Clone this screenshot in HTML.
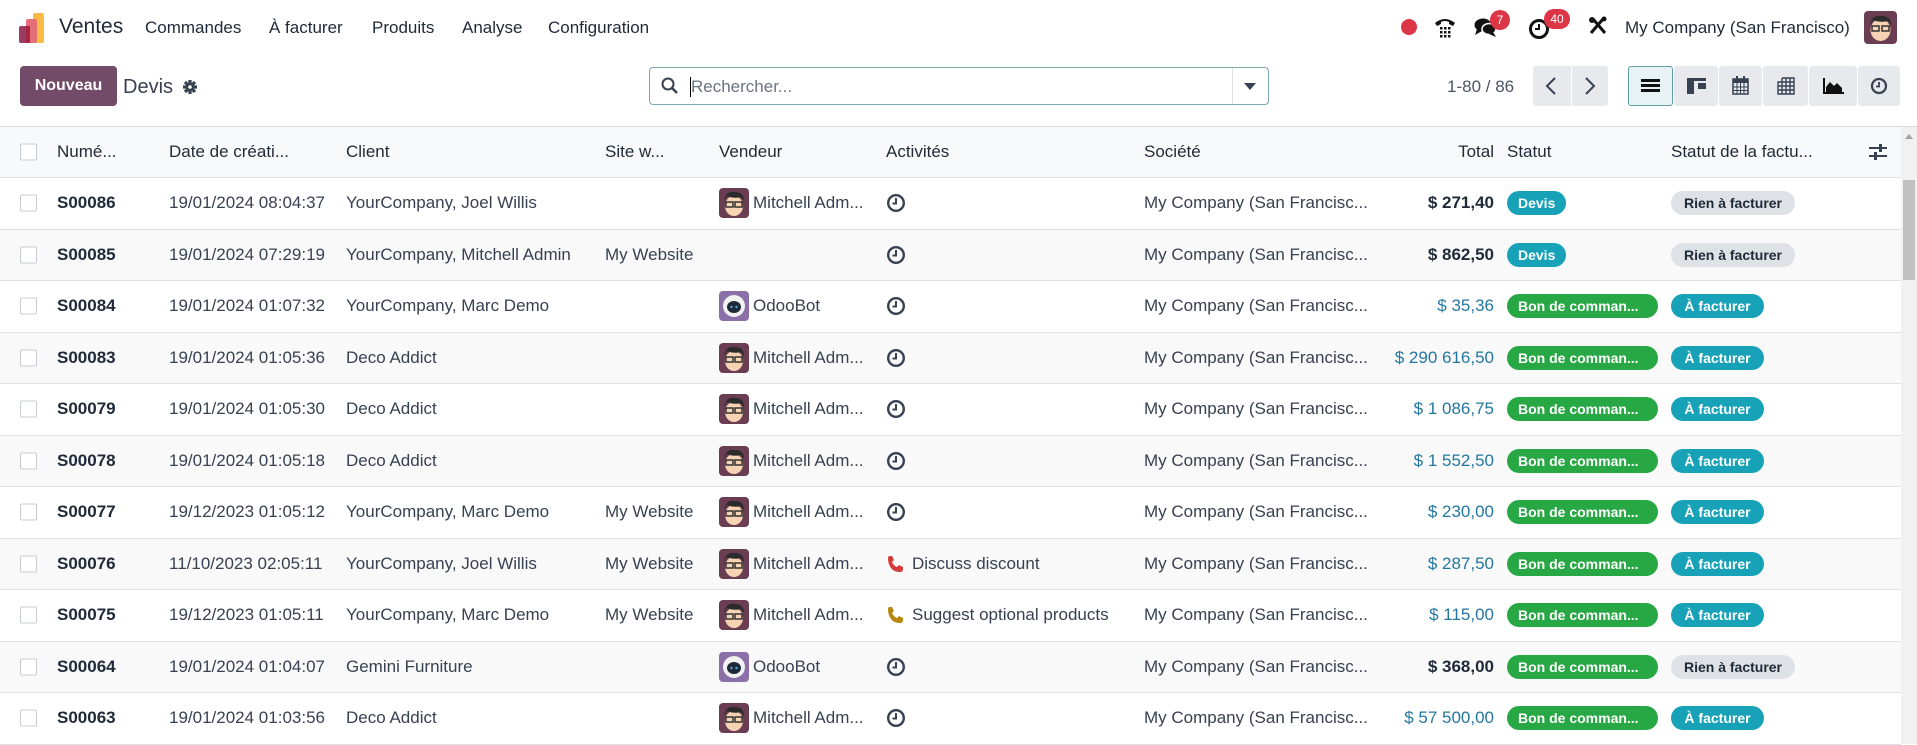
<!DOCTYPE html>
<html><head><meta charset="utf-8"><style>
*{box-sizing:border-box;margin:0;padding:0}
body{width:1917px;height:744px;overflow:hidden;background:#fff;font-family:"Liberation Sans",sans-serif;color:#374151;position:relative}
.a{position:absolute;white-space:nowrap}
.nav{font-size:17px;color:#1f2937;top:18px}
.row{position:absolute;left:0;width:1901px;height:51.5px;border-bottom:1px solid #dee2e6;font-size:17px}
.row .a{top:50%;transform:translateY(-50%)}
.g{background:#f9f9fa}
.cb{left:20px;width:17px;height:17px;border:1px solid #c7cbd1;background:#fff;border-radius:2px}
.num{left:57px;font-weight:bold;color:#1f2937}
.date{left:169px}.cli{left:346px}.site{left:605px}
.av{left:719px;width:30px;height:30px;border-radius:4px;overflow:hidden}
.vend{left:753px}
.act{left:886px}
.soc{left:1144px}
.tot{right:407px}
.b{font-weight:bold;color:#1f2937}
.bl{color:#23779f}
.st{left:1507px}.sf{left:1671px}
.badge{font-size:14px;font-weight:bold;height:24px;line-height:24px;padding:0 11px;border-radius:12px;color:#fff}
.dv{background:#17a2b8}.bo{background:#28a745;width:151px}.af{background:#17a2b8;width:93px;text-align:center}.ri{background:#dee2e6;color:#1f2937;width:124px;text-align:center;font-weight:bold}
.vb{position:absolute;top:66px;height:40px;background:#e7e9ed;border-radius:3px}
</style></head><body>
<svg class="a" style="left:19px;top:13px" width="28" height="30" viewBox="0 0 28 30"><rect x="14" y="0" width="11" height="30" rx="2" fill="#fbb945"/><rect x="7" y="6" width="11" height="24" rx="2" fill="#e46f78"/><rect x="0" y="13" width="11" height="17" rx="2" fill="#9c3b63"/><rect x="7" y="13" width="4" height="17" fill="#a5283f"/></svg>
<div class="a nav" style="left:59px;top:15px;font-size:21px">Ventes</div>
<div class="a nav" style="left:145px">Commandes</div>
<div class="a nav" style="left:269px">À facturer</div>
<div class="a nav" style="left:372px">Produits</div>
<div class="a nav" style="left:462px">Analyse</div>
<div class="a nav" style="left:548px">Configuration</div>
<div class="a" style="left:1401px;top:19px;width:16px;height:16px;border-radius:50%;background:#dc3545"></div>
<svg class="a" style="left:1434px;top:16px" width="22" height="22" viewBox="0 0 22 22"><path d="M1 7 Q11 -1 21 7 L19 10 L15 8 L15 6 Q11 4 7 6 L7 8 L3 10Z" fill="#111"/><g fill="#111"><rect x="6" y="11" width="2.5" height="2.5"/><rect x="10" y="11" width="2.5" height="2.5"/><rect x="14" y="11" width="2.5" height="2.5"/><rect x="6" y="15" width="2.5" height="2.5"/><rect x="10" y="15" width="2.5" height="2.5"/><rect x="14" y="15" width="2.5" height="2.5"/><rect x="6" y="19" width="2.5" height="2.5"/><rect x="10" y="19" width="2.5" height="2.5"/><rect x="14" y="19" width="2.5" height="2.5"/></g></svg>
<svg class="a" style="left:1474px;top:16px" width="24" height="22" viewBox="0 0 24 22"><ellipse cx="9" cy="9" rx="8.5" ry="6.5" fill="#111"/><path d="M3 13 L1 19 L8 15Z" fill="#111"/><ellipse cx="15" cy="13" rx="7" ry="5.5" fill="#111" stroke="#fff" stroke-width="1.5"/><path d="M19 16 L22 21 L15 18Z" fill="#111"/></svg>
<div class="a" style="left:1490px;top:10px;width:20px;height:20px;border-radius:10px;background:#dc3545;color:#fff;font-size:12px;line-height:20px;text-align:center">7</div>
<svg class="a" style="left:1528px;top:18px" width="22" height="22" viewBox="0 0 22 22"><circle cx="11" cy="11" r="8.5" fill="none" stroke="#111" stroke-width="3"/><path d="M11 6 V11 H7" fill="none" stroke="#111" stroke-width="2"/></svg>
<div class="a" style="left:1544px;top:9px;width:26px;height:20px;border-radius:10px;background:#dc3545;color:#fff;font-size:12px;line-height:20px;text-align:center">40</div>
<svg class="a" style="left:1588px;top:16px" width="20" height="20" viewBox="0 0 20 20"><path d="M3 17 L15 3 M5 3 L17 17" stroke="#111" stroke-width="3"/><circle cx="4" cy="4" r="3" fill="#111"/><circle cx="16" cy="3" r="2.5" fill="#111"/></svg>
<div class="a nav" style="left:1625px;font-size:17px">My Company (San Francisco)</div>
<svg class="a" style="left:1864px;top:11px" width="33" height="33" viewBox="0 0 33 33"><rect width="33" height="33" rx="4" fill="#6a3d52"/><ellipse cx="16.5" cy="19" rx="10" ry="11" fill="#f5d3b3"/><path d="M6 14 Q8 3 18 5 Q27 5 27 14 L24 10 Q16 12 9 9Z" fill="#2b2b2b"/><rect x="8" y="15" width="7" height="5" fill="none" stroke="#333" stroke-width="1.5"/><rect x="18" y="15" width="7" height="5" fill="none" stroke="#333" stroke-width="1.5"/></svg>
<div class="a" style="left:20px;top:66px;width:97px;height:40px;background:#714b67;border-radius:4px;color:#fff;font-weight:bold;font-size:16px;line-height:40px;text-align:center">Nouveau</div>
<div class="a" style="left:123px;top:76px;font-size:20px;color:#374151">Devis</div>
<svg class="a" style="left:182px;top:79px" width="16" height="16" viewBox="0 0 16 16"><g stroke="#374151" stroke-width="3.2"><path d="M8 1 V15 M1 8 H15 M3 3 L13 13 M13 3 L3 13"/></g><circle cx="8" cy="8" r="4.5" fill="#374151"/><circle cx="8" cy="8" r="1.8" fill="#fff"/></svg>
<div class="a" style="left:649px;top:67px;width:620px;height:38px;border:1px solid #7fa8b0;border-radius:4px"></div>
<div class="a" style="left:1232px;top:68px;width:1px;height:36px;background:#dee2e6"></div>
<svg class="a" style="left:661px;top:77px" width="18" height="18" viewBox="0 0 18 18"><circle cx="7" cy="7" r="5.5" fill="none" stroke="#374151" stroke-width="2"/><path d="M11 11 L16 16" stroke="#374151" stroke-width="2.5"/></svg>
<div class="a" style="left:690px;top:77px;width:1px;height:20px;background:#000"></div>
<div class="a" style="left:691px;top:77px;font-size:17px;color:#6b7280">Rechercher...</div>
<svg class="a" style="left:1244px;top:83px" width="12" height="8" viewBox="0 0 12 8"><path d="M0 0 H12 L6 7Z" fill="#374151"/></svg>
<div class="a" style="left:1447px;top:77px;font-size:17px;color:#4b5563">1-80 / 86</div>
<div class="vb" style="left:1533px;width:38px;border-radius:3px 0 0 3px"></div>
<div class="vb" style="left:1572px;width:36px;border-radius:0 3px 3px 0"></div>
<svg class="a" style="left:1545px;top:77px" width="12" height="18" viewBox="0 0 12 18"><path d="M10 1 L2 9 L10 17" fill="none" stroke="#374151" stroke-width="2"/></svg>
<svg class="a" style="left:1584px;top:77px" width="12" height="18" viewBox="0 0 12 18"><path d="M2 1 L10 9 L2 17" fill="none" stroke="#374151" stroke-width="2"/></svg>
<div class="vb" style="left:1628px;width:45px;background:#e6f2f3;border:1px solid #5f9ea6"></div>
<div class="vb" style="left:1674px;width:44px"></div>
<div class="vb" style="left:1719px;width:43px"></div>
<div class="vb" style="left:1763px;width:45px"></div>
<div class="vb" style="left:1809px;width:48px"></div>
<div class="vb" style="left:1858px;width:42px"></div>
<svg class="a" style="left:1641px;top:78px" width="19" height="16" viewBox="0 0 19 16"><rect y="1" width="19" height="3" fill="#111"/><rect y="6" width="19" height="3" fill="#111"/><rect y="11" width="19" height="3" fill="#111"/></svg>
<svg class="a" style="left:1687px;top:78px" width="19" height="16" viewBox="0 0 19 16"><rect x="0" y="0" width="19" height="3" fill="#374151"/><rect x="0" y="0" width="7" height="16" fill="#374151"/><rect x="11" y="5" width="8" height="6" fill="#374151"/></svg>
<svg class="a" style="left:1732px;top:76px" width="17" height="19" viewBox="0 0 17 19"><rect x="1" y="3" width="15" height="15" fill="none" stroke="#374151" stroke-width="1.5"/><rect x="1" y="3" width="15" height="4" fill="#374151"/><path d="M1 11 H16 M1 14.5 H16 M5 7 V18 M8.5 7 V18 M12 7 V18" stroke="#374151" stroke-width="1"/><rect x="4" y="0" width="2" height="4" fill="#374151"/><rect x="11" y="0" width="2" height="4" fill="#374151"/></svg>
<svg class="a" style="left:1777px;top:77px" width="18" height="18" viewBox="0 0 18 18"><path d="M5 1 H17 V17 H1 V5 H17 M1 9 H17 M1 13 H17 M5 1 V17 M9 1 V17 M13 1 V17" fill="none" stroke="#374151" stroke-width="1.4"/></svg>
<svg class="a" style="left:1823px;top:78px" width="21" height="16" viewBox="0 0 21 16"><path d="M1 0 V15 H21" fill="none" stroke="#111" stroke-width="2"/><path d="M3 14 L3 9 L7 4 L11 8 L14 5 L19 10 L19 14Z" fill="#111"/></svg>
<svg class="a" style="left:1870px;top:77px" width="18" height="18" viewBox="0 0 18 18"><circle cx="9" cy="9" r="7" fill="none" stroke="#374151" stroke-width="2.2"/><path d="M9 5 V9.5 H6" fill="none" stroke="#374151" stroke-width="1.8"/></svg>
<div class="a" style="left:0;top:126px;width:1917px;height:1px;background:#d8dadd"></div>
<div class="row" style="top:127px;background:#f8f9fa;font-size:17px;color:#1f2937;height:51px">
<div class="a cb"></div><div class="a" style="left:57px">Numé...</div><div class="a date">Date de créati...</div><div class="a cli">Client</div><div class="a site">Site w...</div><div class="a" style="left:719px">Vendeur</div><div class="a act">Activités</div><div class="a soc">Société</div><div class="a tot">Total</div><div class="a st">Statut</div><div class="a sf">Statut de la factu...</div>
<svg class="a" style="left:1869px" width="18" height="18" viewBox="0 0 18 18"><path d="M0 5 H18 M0 13 H18" stroke="#374151" stroke-width="2"/><rect x="10" y="1" width="3" height="8" fill="#374151"/><rect x="5" y="9" width="3" height="8" fill="#374151"/></svg>
</div>
<div class="a" style="left:1901px;top:127px;width:16px;height:617px;background:#f1f1f1"></div>
<div class="a" style="left:1903px;top:180px;width:12px;height:100px;background:#c1c1c1"></div>
<svg class="a" style="left:1905px;top:134px" width="8" height="5" viewBox="0 0 8 5"><path d="M0 5 L4 0 L8 5Z" fill="#a3a3a3"/></svg>

<svg width="0" height="0" style="position:absolute"><defs>
<symbol id="mi" viewBox="0 0 30 30"><rect width="30" height="30" fill="#6a3d52"/><ellipse cx="15" cy="18" rx="9" ry="10" fill="#f5d3b3"/><path d="M5 13 Q7 2 16 4 Q25 4 25 13 L22 9 Q15 11 8 8Z" fill="#2b2b2b"/><rect x="7" y="14" width="7" height="5" fill="none" stroke="#333" stroke-width="1.5"/><rect x="16" y="14" width="7" height="5" fill="none" stroke="#333" stroke-width="1.5"/></symbol>
<symbol id="ob" viewBox="0 0 30 30"><rect width="30" height="30" fill="#8b6fa8"/><circle cx="15" cy="15" r="11" fill="#f2f2f2"/><ellipse cx="15" cy="16" rx="7" ry="6" fill="#1f2937"/><circle cx="12.5" cy="16" r="1.2" fill="#5ad"/><circle cx="17.5" cy="16" r="1.2" fill="#5ad"/></symbol>
<symbol id="ck" viewBox="0 0 20 20"><circle cx="10" cy="10" r="7.8" fill="none" stroke="#374151" stroke-width="2.4"/><path d="M10 5 V10.5 H6.5" fill="none" stroke="#374151" stroke-width="2"/></symbol>
<symbol id="ph" viewBox="0 0 18 18"><path d="M2 3 Q2 1 4 1 L6 1 L8 5 L6 7 Q8 11 11 12 L13 10 L17 12 L17 14 Q17 17 14 17 Q8 17 5 13 Q2 9 2 3Z"/></symbol>
</defs></svg>

<div class="row" style="top:178px"><div class="a cb"></div><div class="a num">S00086</div><div class="a date">19/01/2024 08:04:37</div><div class="a cli">YourCompany, Joel Willis</div><svg class="a av"><use href="#mi"/></svg><div class="a vend">Mitchell Adm...</div><svg class="a act" width="20" height="20"><use href="#ck"/></svg><div class="a soc">My Company (San Francisc...</div><div class="a tot b">$ 271,40</div><div class="a st badge dv">Devis</div><div class="a sf badge ri">Rien à facturer</div></div>
<div class="row g" style="top:229.5px"><div class="a cb"></div><div class="a num">S00085</div><div class="a date">19/01/2024 07:29:19</div><div class="a cli">YourCompany, Mitchell Admin</div><div class="a site">My Website</div><svg class="a act" width="20" height="20"><use href="#ck"/></svg><div class="a soc">My Company (San Francisc...</div><div class="a tot b">$ 862,50</div><div class="a st badge dv">Devis</div><div class="a sf badge ri">Rien à facturer</div></div>
<div class="row" style="top:281px"><div class="a cb"></div><div class="a num">S00084</div><div class="a date">19/01/2024 01:07:32</div><div class="a cli">YourCompany, Marc Demo</div><svg class="a av"><use href="#ob"/></svg><div class="a vend">OdooBot</div><svg class="a act" width="20" height="20"><use href="#ck"/></svg><div class="a soc">My Company (San Francisc...</div><div class="a tot bl">$ 35,36</div><div class="a st badge bo">Bon de comman...</div><div class="a sf badge af">À facturer</div></div>
<div class="row g" style="top:332.5px"><div class="a cb"></div><div class="a num">S00083</div><div class="a date">19/01/2024 01:05:36</div><div class="a cli">Deco Addict</div><svg class="a av"><use href="#mi"/></svg><div class="a vend">Mitchell Adm...</div><svg class="a act" width="20" height="20"><use href="#ck"/></svg><div class="a soc">My Company (San Francisc...</div><div class="a tot bl">$ 290 616,50</div><div class="a st badge bo">Bon de comman...</div><div class="a sf badge af">À facturer</div></div>
<div class="row" style="top:384px"><div class="a cb"></div><div class="a num">S00079</div><div class="a date">19/01/2024 01:05:30</div><div class="a cli">Deco Addict</div><svg class="a av"><use href="#mi"/></svg><div class="a vend">Mitchell Adm...</div><svg class="a act" width="20" height="20"><use href="#ck"/></svg><div class="a soc">My Company (San Francisc...</div><div class="a tot bl">$ 1 086,75</div><div class="a st badge bo">Bon de comman...</div><div class="a sf badge af">À facturer</div></div>
<div class="row g" style="top:435.5px"><div class="a cb"></div><div class="a num">S00078</div><div class="a date">19/01/2024 01:05:18</div><div class="a cli">Deco Addict</div><svg class="a av"><use href="#mi"/></svg><div class="a vend">Mitchell Adm...</div><svg class="a act" width="20" height="20"><use href="#ck"/></svg><div class="a soc">My Company (San Francisc...</div><div class="a tot bl">$ 1 552,50</div><div class="a st badge bo">Bon de comman...</div><div class="a sf badge af">À facturer</div></div>
<div class="row" style="top:487px"><div class="a cb"></div><div class="a num">S00077</div><div class="a date">19/12/2023 01:05:12</div><div class="a cli">YourCompany, Marc Demo</div><div class="a site">My Website</div><svg class="a av"><use href="#mi"/></svg><div class="a vend">Mitchell Adm...</div><svg class="a act" width="20" height="20"><use href="#ck"/></svg><div class="a soc">My Company (San Francisc...</div><div class="a tot bl">$ 230,00</div><div class="a st badge bo">Bon de comman...</div><div class="a sf badge af">À facturer</div></div>
<div class="row g" style="top:538.5px"><div class="a cb"></div><div class="a num">S00076</div><div class="a date">11/10/2023 02:05:11</div><div class="a cli">YourCompany, Joel Willis</div><div class="a site">My Website</div><svg class="a av"><use href="#mi"/></svg><div class="a vend">Mitchell Adm...</div><svg class="a act" width="18" height="18" style="fill:#d63b3b"><use href="#ph"/></svg><div class="a" style="left:912px">Discuss discount</div><div class="a soc">My Company (San Francisc...</div><div class="a tot bl">$ 287,50</div><div class="a st badge bo">Bon de comman...</div><div class="a sf badge af">À facturer</div></div>
<div class="row" style="top:590px"><div class="a cb"></div><div class="a num">S00075</div><div class="a date">19/12/2023 01:05:11</div><div class="a cli">YourCompany, Marc Demo</div><div class="a site">My Website</div><svg class="a av"><use href="#mi"/></svg><div class="a vend">Mitchell Adm...</div><svg class="a act" width="18" height="18" style="fill:#b8860b"><use href="#ph"/></svg><div class="a" style="left:912px">Suggest optional products</div><div class="a soc">My Company (San Francisc...</div><div class="a tot bl">$ 115,00</div><div class="a st badge bo">Bon de comman...</div><div class="a sf badge af">À facturer</div></div>
<div class="row g" style="top:641.5px"><div class="a cb"></div><div class="a num">S00064</div><div class="a date">19/01/2024 01:04:07</div><div class="a cli">Gemini Furniture</div><svg class="a av"><use href="#ob"/></svg><div class="a vend">OdooBot</div><svg class="a act" width="20" height="20"><use href="#ck"/></svg><div class="a soc">My Company (San Francisc...</div><div class="a tot b">$ 368,00</div><div class="a st badge bo">Bon de comman...</div><div class="a sf badge ri">Rien à facturer</div></div>
<div class="row" style="top:693px"><div class="a cb"></div><div class="a num">S00063</div><div class="a date">19/01/2024 01:03:56</div><div class="a cli">Deco Addict</div><svg class="a av"><use href="#mi"/></svg><div class="a vend">Mitchell Adm...</div><svg class="a act" width="20" height="20"><use href="#ck"/></svg><div class="a soc">My Company (San Francisc...</div><div class="a tot bl">$ 57 500,00</div><div class="a st badge bo">Bon de comman...</div><div class="a sf badge af">À facturer</div></div>
</body></html>
